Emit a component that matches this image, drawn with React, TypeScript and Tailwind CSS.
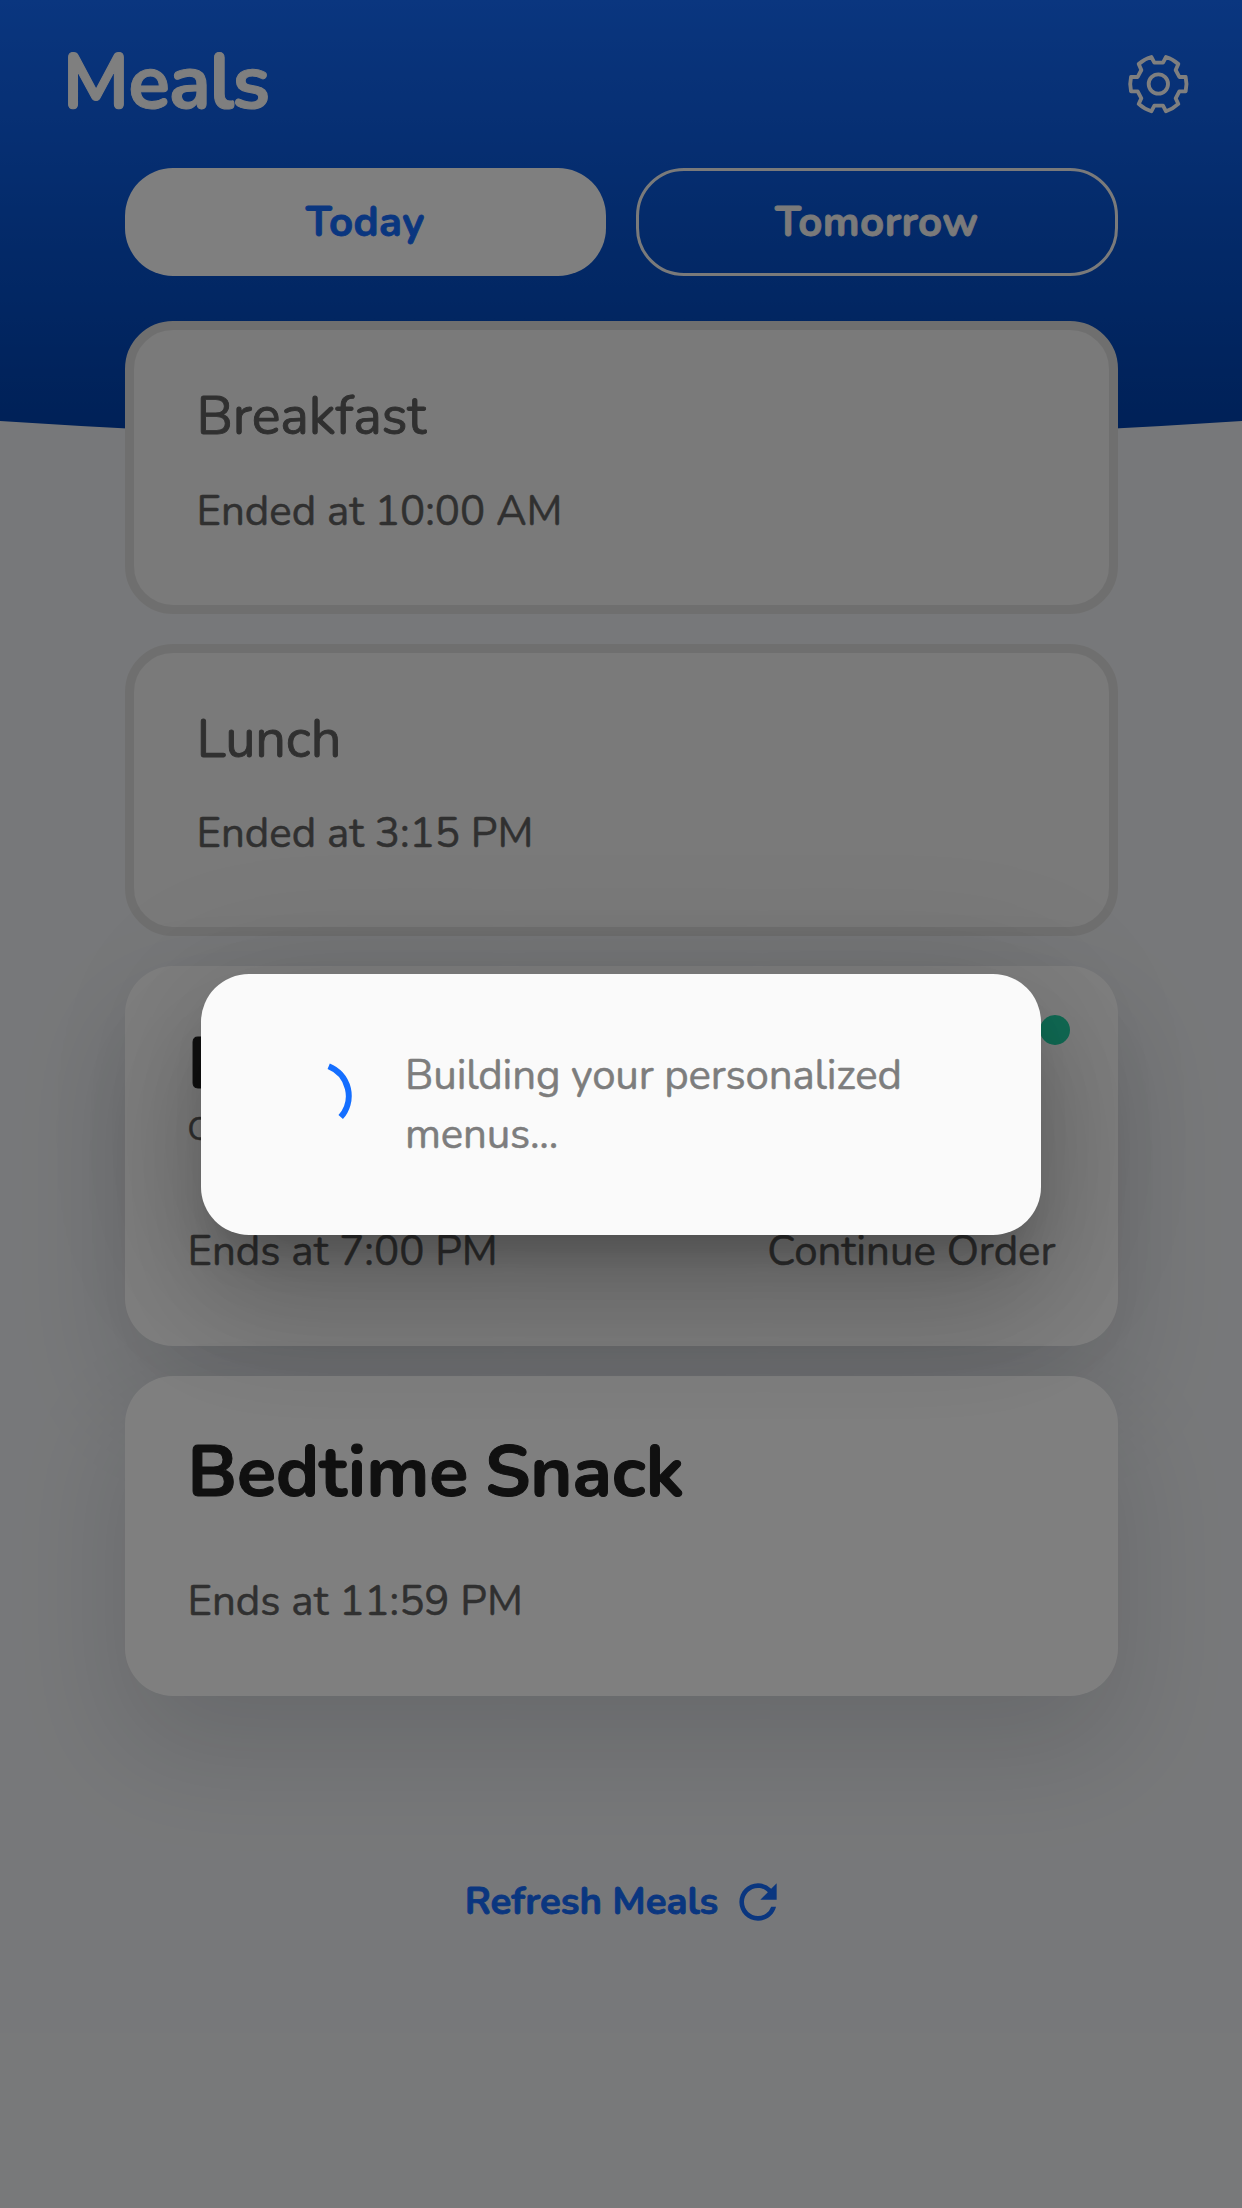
import type { ReactNode } from "react";

function GearIcon() {
  return (
    <svg viewBox="80 70 188 184" className="h-[61.3px] w-[62.7px]" fill="none" stroke="currentColor" strokeWidth="11.5" strokeLinejoin="round">
      <path d="M162 99H188L197 82Q218 88 234 103L226 121L237 142H256Q261 163 256 185H237L226 206L234 223Q218 238 197 245L188 228H162L153 245Q131 238 115 223L123 206L112 185H92Q87 163 92 142H112L123 121L115 103Q131 88 153 82Z" />
      <circle cx="174" cy="163" r="29" />
    </svg>
  );
}

function RefreshIcon() {
  return (
    <svg viewBox="0 0 24 24" className="h-14 w-14" fill="currentColor">
      <path d="M17.65 6.35A7.958 7.958 0 0 0 12 4c-4.42 0-7.99 3.58-7.99 8s3.57 8 7.99 8c3.73 0 6.84-2.55 7.73-6h-2.08A5.99 5.99 0 0 1 12 18c-3.31 0-6-2.69-6-6s2.69-6 6-6c1.66 0 3.14.69 4.22 1.78L13 11h7V4l-2.35 2.35z" />
    </svg>
  );
}

function Spinner() {
  return (
    <svg viewBox="0 0 72 72" className="size-18" fill="none" stroke="#146eff" strokeWidth="6">
      <path d="M48.7 6.2A32 32 0 0 1 60.7 57.1" />
    </svg>
  );
}

function EndedCard({ title, time }: { title: string; time: string }) {
  return (
    <section className="h-[292.5px] rounded-[48px] border-[9px] border-[#dfdfdf] bg-[#f4f4f4] pt-[49px] pl-[63px] text-[#606060]">
      <h2 className="text-[54px] leading-[74px] tracking-[-0.15px] [-webkit-text-stroke:0.9px_currentColor]">{title}</h2>
      <p className="mt-[29.5px] text-[42px] leading-[58px]">{time}</p>
    </section>
  );
}

function OpenCard({ title, className, children }: { title: string; className: string; children: ReactNode }) {
  return (
    <section className={`relative rounded-[48px] bg-white px-[63px] text-[#606060] shadow-[0_52px_114px_rgba(20,28,40,0.14)] ${className}`}>
      <h2 className="text-[72px] leading-[88px] font-bold text-[#202020] [word-spacing:-3px] [-webkit-text-stroke:1px_currentColor]">{title}</h2>
      {children}
    </section>
  );
}

export default function App() {
  return (
    <div className="relative h-[2208px] w-[1242px] overflow-hidden bg-[#eff1f4] font-['Nunito','Lato',sans-serif] [-webkit-text-stroke:0.5px_currentColor]">
      <div className="absolute inset-x-0 top-0 h-[442px] bg-linear-to-b from-[#146cff] to-[#0040ac] [clip-path:circle(9400px_at_50%_-8958.5px)]" />

      <div className="relative">
        <header className="flex h-[168px] items-start justify-between pt-[31px] pr-[52px] pl-[62.5px] text-white">
          <h1 className="text-[77px] leading-[104px] font-bold tracking-[-1.2px] [-webkit-text-stroke:1px_currentColor]">Meals</h1>
          <div className="pt-[22px]">
            <GearIcon />
          </div>
        </header>

        <main className="mx-auto w-[993px]">
          <nav className="grid h-[108px] grid-cols-2 gap-[30px] text-[42px] font-bold tracking-[0.4px] [-webkit-text-stroke:0.8px_currentColor]">
            <button className="rounded-[48px] bg-white text-[#146cff]">Today</button>
            <button className="rounded-[48px] border-[3px] border-[#f5f5f5] text-[#f5f5f5]">Tomorrow</button>
          </nav>

          <div className="mt-[45px] flex flex-col gap-[30px]">
            <EndedCard title="Breakfast" time="Ended at 10:00 AM" />
            <EndedCard title="Lunch" time="Ended at 3:15 PM" />
            <OpenCard title="Dinner" className="h-[380px] pt-[53.5px]">
              <span className="absolute top-[49px] right-[48px] size-[30px] rounded-full bg-[#22d8aa]" />
              <p className="text-[32px] leading-[44px]">Order in progress</p>
              <div className="-mr-px mt-[71px] flex justify-between text-[42px] leading-[58px]">
                <span>Ends at 7:00 PM</span>
                <span>Continue Order</span>
              </div>
            </OpenCard>
            <OpenCard title="Bedtime Snack" className="h-[320px] pt-[52px]">
              <p className="mt-[57px] text-[42px] leading-[58px]">Ends at 11:59 PM</p>
            </OpenCard>
          </div>

          <button className="mt-[178px] flex w-full items-center justify-center gap-3 pl-[9px] text-[38.5px] leading-[54px] font-bold text-[#146cff] [-webkit-text-stroke:0.8px_currentColor]">
            <span className="tracking-[-0.05px]">Refresh Meals</span>
            <RefreshIcon />
          </button>
        </main>
      </div>

      <div className="absolute inset-0 flex items-center justify-center bg-black/50">
        <div role="dialog" className="mt-px flex h-[261px] w-[840px] items-center rounded-[48px] bg-[#fafafa] pl-[79px] shadow-[0_33px_45px_-21px_rgba(0,0,0,0.23),0_72px_114px_9px_rgba(0,0,0,0.14),0_27px_138px_24px_rgba(0,0,0,0.12)]">
          <div className="-mt-[18px]">
            <Spinner />
          </div>
          <p className="ml-[53px] w-[540px] pt-px text-[42px] leading-[59px] tracking-[-0.16px] text-[#7d7d7d]">Building your personalized menus...</p>
        </div>
      </div>
    </div>
  );
}
